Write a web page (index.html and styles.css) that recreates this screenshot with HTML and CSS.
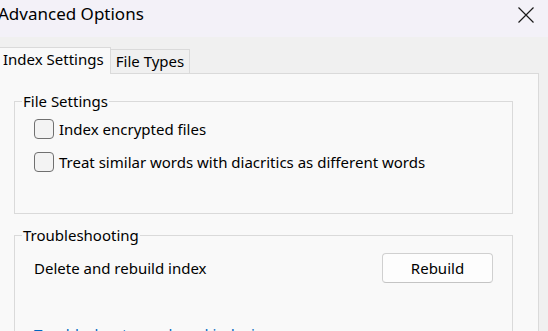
FILE: index.html
```html
<!DOCTYPE html>
<html>
<head>
  <title>Advanced Options</title>
  <link rel="stylesheet" href="styles.css">
</head>
<body>
  <div class="titlebar">
    <span class="title">Advanced Options</span>
    <button class="close" aria-label="Close">
      <svg width="16" height="16" viewBox="0 0 16 16">
        <path d="M0.5 0.5 L15.5 15.5 M15.5 0.5 L0.5 15.5" stroke="#1a1a1a" stroke-width="1.2" fill="none"/>
      </svg>
    </button>
  </div>

  <div class="dialog">
    <div class="tabs">
      <div class="tab active">Index Settings</div>
      <div class="tab">File Types</div>
    </div>

    <div class="panel">
      <fieldset class="group">
        <legend>File Settings</legend>
        <label class="check">
          <input type="checkbox">
          <span>Index encrypted files</span>
        </label>
        <label class="check">
          <input type="checkbox">
          <span>Treat similar words with diacritics as different words</span>
        </label>
      </fieldset>

      <fieldset class="group">
        <legend>Troubleshooting</legend>
        <div class="row">
          <span>Delete and rebuild index</span>
          <button class="btn">Rebuild</button>
        </div>
        <a href="#" class="link">Troubleshoot search and indexing</a>
      </fieldset>
    </div>
  </div>
</body>
</html>
```

FILE: styles.css
```css
:root {
  --titlebar-bg: #f3f1f8;
  --window-bg: #f0f0f0;
  --panel-bg: #f9f9f9;
  --border-color: #dadada;
  --text-color: #000;
  --link-color: #0067c0;
  --font-size: 15px;
}

* {
  margin: 0;
  padding: 0;
  box-sizing: border-box;
}

html, body {
  width: 548px;
  height: 331px;
  overflow: hidden;
}

body {
  font-family: 'Noto Sans', sans-serif;
  font-size: var(--font-size);
  color: var(--text-color);
  background-color: var(--window-bg);
}

.titlebar {
  height: 37px;
  display: flex;
  justify-content: space-between;
  align-items: flex-start;
  background-color: var(--titlebar-bg);
}

.title {
  margin-left: -2px;
  padding-top: 2px;
  font-size: 17px;
  line-height: 24px;
}

.close {
  border: none;
  background: none;
  margin: 7px 14px 0 0;
  width: 16px;
  height: 16px;
}

.close svg {
  display: block;
}

.dialog {
  padding: 10px 9px 0 0;
  margin-left: -1px;
}

.tabs {
  display: flex;
  align-items: flex-end;
  height: 26px;
}

.tab {
  width: 79px;
  height: 24px;
  line-height: 23px;
  text-align: center;
  background-color: var(--window-bg);
  border: 1px solid var(--border-color);
  border-left: none;
  border-bottom: none;
}

.tab.active {
  width: 112px;
  height: 27px;
  margin-bottom: -1px;
  padding-left: 3px;
  line-height: 22px;
  text-align: left;
  background-color: var(--panel-bg);
  border-left: 1px solid var(--border-color);
  position: relative;
  z-index: 1;
}

.panel {
  height: 300px;
  padding: 17px 25px 0 14px;
  background-color: var(--panel-bg);
  border: 1px solid var(--border-color);
}

.group {
  border: 1px solid var(--border-color);
  padding: 8px 19px 41px 19px;
  margin-bottom: 11px;
}

.group legend {
  margin-left: -12px;
  padding: 0 1px;
  line-height: 20px;
}

.check {
  display: flex;
  align-items: center;
  gap: 5px;
  height: 20px;
  margin-bottom: 13px;
}

.check:last-child {
  margin-bottom: 0;
}

.check input {
  appearance: none;
  width: 20px;
  height: 20px;
  border: 1px solid #707070;
  border-radius: 4px;
  background-color: #f3f3f3;
}

.row {
  display: flex;
  justify-content: space-between;
  align-items: center;
}

.btn {
  width: 111px;
  height: 30px;
  font-family: inherit;
  font-size: var(--font-size);
  color: var(--text-color);
  background-color: #fdfdfd;
  border: 1px solid #d0d0d0;
  border-bottom-color: #c4c4c4;
  border-radius: 4px;
}

.link {
  display: block;
  margin-top: 40px;
  line-height: 22px;
  color: var(--link-color);
  text-decoration: none;
}
```
